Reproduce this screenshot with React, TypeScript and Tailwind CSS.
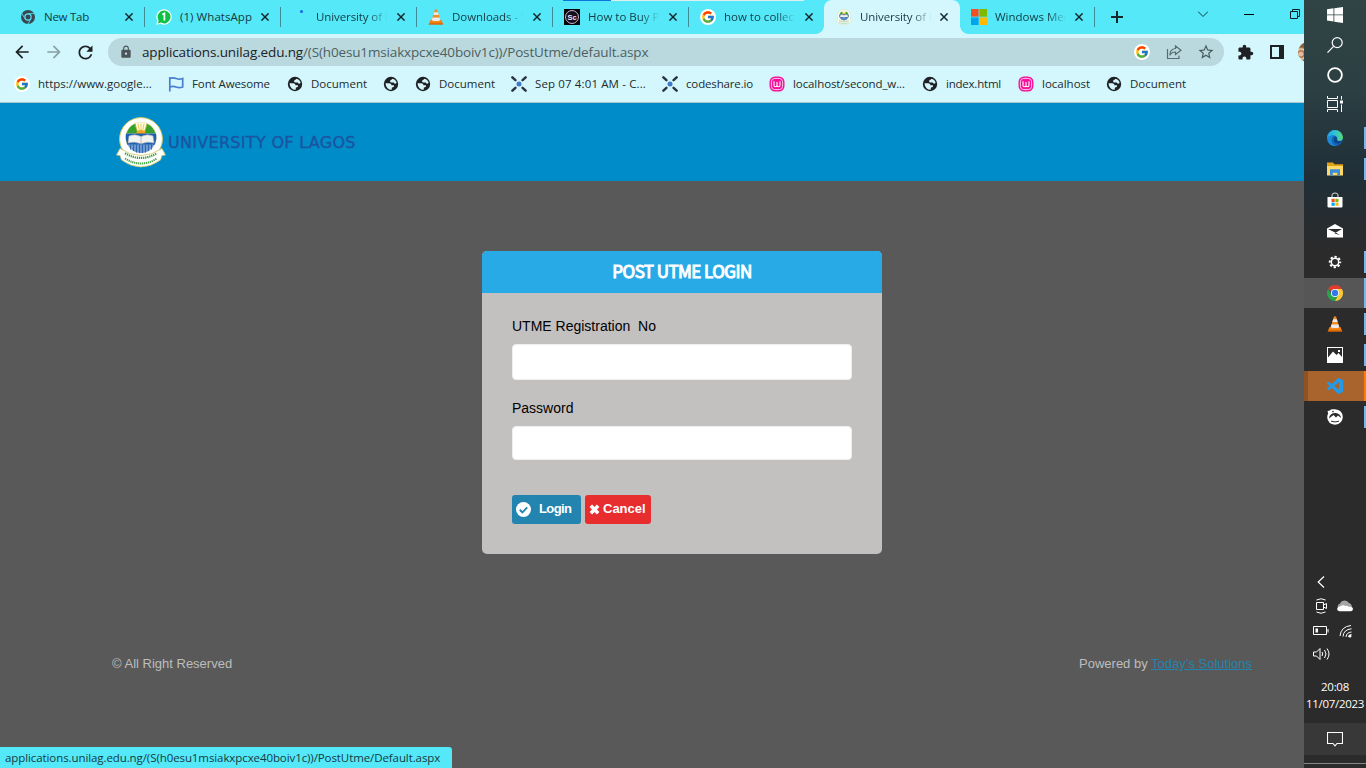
import type { ReactNode } from "react";
import { MdArrowBack, MdArrowForward, MdExtension, MdLock, MdRefresh, MdStarBorder } from "react-icons/md";
import { FcGoogle } from "react-icons/fc";

function ChromeGray() {
  return (
    <svg viewBox="0 0 16 16" className="size-4">
      <circle cx="8" cy="8" r="7" fill="#3c4650" />
      <path d="M8 4.6h6.2M5 9.7 2 4.6M11 9.7 7.9 15" stroke="#54e8f8" strokeWidth=".8" />
      <circle cx="8" cy="8" r="3.7" fill="#54e8f8" />
      <circle cx="8" cy="8" r="2.5" fill="#3c4650" />
    </svg>
  );
}
function WhatsApp() {
  return (
    <svg viewBox="0 0 16 16" className="size-4">
      <path d="M8.2.2a7.7 7.7 0 1 1-3.6 14.6L.2 15.8l1.1-4.2A7.7 7.7 0 0 1 8.2.2z" fill="#fff" />
      <path d="M8.2 1.4a6.500 6.500 0 1 1-3.300 12.200L1.900 14.400l.8-3A6.500 6.500 0 0 1 8.200 1.400z" fill="#0cc143" />
      <path d="M6.300 5.600 8.400 4.500v7" stroke="#fff" strokeWidth="1.700" fill="none" />
    </svg>
  );
}
function Cone() {
  return (
    <svg viewBox="0 0 16 16" className="size-4">
      <path d="M2.500 11h11l1.800 4.600H.7z" fill="#f07d0c" />
      <path d="M7 .6h2L12.800 12.500q-4.800 2-9.600 0z" fill="#f58a1d" />
      <path d="M6.200 3.200h3.600l.9 2.900H5.300zM4.500 8.500h7l.8 2.700q-4.300 1.700-8.600 0z" fill="#e9ecee" />
      <path d="M1.200 14.500h13.600v1.100H.7z" fill="#c85e05" />
    </svg>
  );
}
function Adobe() {
  return (
    <svg viewBox="0 0 16 16" className="size-4">
      <path d="M0 0h16v16H0z" fill="#050308" />
      <circle cx="8" cy="8" r="6.500" fill="#160f22" stroke="#d8c9dd" strokeWidth=".9" />
      <text x="8" y="10.700" textAnchor="middle" fontSize="7.500" fontFamily="Liberation Sans, sans-serif" fontWeight="bold" fill="#efe3f3">Sc</text>
    </svg>
  );
}
function Google() {
  return (
    <span className="flex size-4 items-center justify-center rounded-full bg-white">
      <FcGoogle size={14} />
    </span>
  );
}
function Microsoft() {
  return (
    <svg viewBox="0 0 16 16" className="-ml-px size-4">
      <path d="M0 0h7.600v7.600H0z" fill="#f25022" /><path d="M8.400 0H16v7.600H8.400z" fill="#7fba00" />
      <path d="M0 8.400h7.600V16H0z" fill="#00a4ef" /><path d="M8.400 8.400H16V16H8.400z" fill="#ffb900" />
    </svg>
  );
}
function Crest({ className }: { className: string }) {
  return (
    <svg viewBox="0 0 50 52" className={className}>
      <circle cx="25" cy="23" r="21.400" fill="#fff" stroke="#d3c866" strokeWidth="1" />
      <g transform="translate(-.5 -.5)">
        <circle cx="25.500" cy="22" r="15.300" fill="#fff" stroke="#dcd68c" strokeWidth=".8" />
        <path d="M11 18A15 15 0 0 1 20 8l2.500 10z" fill="#37a02c" />
        <path d="M40 18A15 15 0 0 0 31 8l-2.500 10z" fill="#37a02c" />
        <path d="M20 7.800a15 15 0 0 1 11 0L28.500 18h-6z" fill="#fffbe0" />
        <path d="M25.500 18V8M22.500 17 19.500 9M28.500 17l3-8M24 16l-1.500-8M27 16l1.500-8" stroke="#e0c23c" strokeWidth=".8" />
        <path d="M20.500 19a5 4.500 0 0 1 10 0z" fill="#f0a21c" />
        <path d="M10.500 18h30q1.200 6-1.500 11.500h-27Q9.500 24 10.500 18z" fill="#1c5fae" />
        <path d="M12 29h27q-4 8-13.500 8.500Q16 37 12 29z" fill="#6b9ad2" />
        <path d="M15 29v5M18 29v6.500M21 29v8M24 29v8.500M27 29v8.500M30 29v8M33 29v6.500M36 29v5" stroke="#2a63ab" strokeWidth=".9" />
        <path d="M13.500 20.500q6-2.500 12 .5 6-3 12-.5l1 7q-7-2-13 .8-6-2.800-13-.8z" fill="#f3f3f1" stroke="#aaaeb2" strokeWidth=".6" />
        <path d="M25.500 21v7" stroke="#999" strokeWidth=".6" />
      </g>
      <path d="M4 32.500q21 14 42 0l3.500 6.500-3.500.5-1.500 4.500q-19.500 14-39 0L4 39.500.5 39z" fill="#fff" stroke="#d3c866" strokeWidth=".8" />
      <path d="M9 37.200q16 9.500 32 0" stroke="#3c9e3c" strokeWidth="2.200" strokeDasharray="1.300 .8" fill="none" />
      <path d="M9 42.500q16 10 32 0" stroke="#3c9e3c" strokeWidth="2" strokeDasharray="1.200 .8" fill="none" />
    </svg>
  );
}
function Globe() {
  return (
    <svg viewBox="0 0 16 16" className="size-4">
      <circle cx="8" cy="8" r="7.200" fill="#202124" />
      <path d="M9.300 2.700q3.200.5 4.200 3.400.2 1.300-1 1.600-1.300-.1-1.700-1.300H8.400q-1.500.1-1.300-1.400.3-1.200 1.500-1.200z" fill="#d3f7fd" />
      <path d="M2.500 7.300h3.600q2.100.2 2.500 1.900l2.300.1q.8 1.700-.8 2l-1.200.3-.2 2.200q-2.200.3-4.200-1.500-1.900-2-2-5z" fill="#d3f7fd" />
    </svg>
  );
}
function Flag() {
  return (
    <svg viewBox="0 0 16 16" className="size-4" fill="none" stroke="#4a7fd0" strokeWidth="1.700">
      <path d="M1.800 1v14.500M1.800 2.500q3.200-1.300 6.400 0t6.500 0v8.500q-3.300 1.300-6.500 0t-6.400 0" />
    </svg>
  );
}
function Codeshare() {
  return (
    <svg viewBox="0 0 16 16" className="size-4">
      <path d="m1.400 1.400 3 2.800M14.600 1.400l-3 2.800M1.400 14.600l3-2.800M14.600 14.600l-3-2.800" stroke="#2c3440" strokeWidth="2.500" strokeLinecap="round" />
      <circle cx="8" cy="8" r="2.500" fill="#3f78c9" />
    </svg>
  );
}
function Wamp() {
  return (
    <svg viewBox="0 0 16 16" className="size-4">
      <rect x=".5" y=".5" width="15" height="15" rx="5.500" fill="#f5119c" />
      <rect x="2.400" y="2.400" width="11.200" height="11.200" rx="3.400" fill="none" stroke="#ffd6f2" strokeWidth=".9" />
      <path d="M5 5.300v3.900q0 1.600 1.500 1.600T8 9.200V6v3.200q0 1.600 1.500 1.600T11 9.200V5.300" stroke="#fff" strokeWidth="1.100" fill="none" />
    </svg>
  );
}
function Close() {
  return (
    <svg viewBox="0 0 8 8" className="size-2" stroke="#14282c" strokeWidth="1.500">
      <path d="m.4.4 7.200 7.200M7.600.4.4 7.600" />
    </svg>
  );
}

const fade = "[mask-image:linear-gradient(to_right,black_72%,transparent_98%)]";
const tabs: { icon: ReactNode; label: string; cls: string; divider: boolean; active?: boolean }[] = [
  { icon: <ChromeGray />, label: "New Tab", cls: "tracking-[-0.25px]", divider: true },
  { icon: <WhatsApp />, label: "(1) WhatsApp", cls: "tracking-[0.06px]", divider: true },
  { icon: <span className="mb-3 ml-2 size-[3px] rounded-full bg-[#1a62e8]" />, label: "University of L", cls: `tracking-[-0.1px] ${fade}`, divider: true },
  { icon: <Cone />, label: "Downloads - Y", cls: `tracking-[-0.05px] ${fade}`, divider: true },
  { icon: <Adobe />, label: "How to Buy Po", cls: fade, divider: true },
  { icon: <Google />, label: "how to collect", cls: fade, divider: false },
  { icon: <Crest className="size-4" />, label: "University of L", cls: `tracking-[-0.1px] ${fade}`, divider: false, active: true },
  { icon: <Microsoft />, label: "Windows Med", cls: `-ml-px ${fade}`, divider: true },
];

function TabStrip() {
  return (
    <div className="relative flex h-[34px] bg-[#54e8f8] pl-2">
      <div className="absolute left-[563px] top-0 flex h-px w-[241px] bg-[#dfeef0]">
        <div className="w-12 bg-[#0d74dc]" />
      </div>
      {tabs.map((t, i) => (
        <div key={i} className={`relative flex shrink-0 items-center pl-3 ${i === 7 ? "w-[135px]" : "w-[136px]"} ${t.active ? "rounded-t-lg bg-[#d3f7fd]" : ""}`}>
          {t.active && (
            <>
              <div className="absolute -left-2 bottom-0 size-2 bg-[radial-gradient(circle_at_0_0,#54e8f8_7.5px,#d3f7fd_8px)]" />
              <div className="absolute -right-2 bottom-0 size-2 bg-[radial-gradient(circle_at_100%_0,#54e8f8_7.5px,#d3f7fd_8px)]" />
            </>
          )}
          <div className="flex w-6 shrink-0 items-center">{t.icon}</div>
          <div className={`w-[73px] shrink-0 overflow-hidden whitespace-nowrap text-[11.5px] leading-5 text-[#143b42] ${t.cls}`}>{t.label}</div>
          <div className={t.active ? "ml-[7px]" : i === 7 ? "ml-[7px]" : "ml-2"}><Close /></div>
          {t.divider && <div className={`absolute right-0 top-[7px] h-5 w-px bg-[#3d8c96] ${i === 7 ? "" : "translate-x-px"}`} />}
        </div>
      ))}
      <svg viewBox="0 0 12 12" className="ml-4 mt-[11px] size-3" stroke="#16282c" strokeWidth="2"><path d="M6 0v12M0 6h12" /></svg>
      <svg viewBox="0 0 10 10" className="ml-[75px] mt-[9px] size-2.5" stroke="#14383e" fill="none"><path d="m0 2.500 5 5 5-5" /></svg>
      <div className="ml-9 mt-[14px] h-px w-2.5 bg-black" />
      <svg viewBox="0 0 10 10" className="ml-9 mt-[9px] size-2.5 shrink-0" stroke="#0d2024" fill="none"><path d="M.5 2.500h7v7h-7zM2.500 2.500v-2h7v7h-2" /></svg>
    </div>
  );
}

function Toolbar() {
  return (
    <div className="flex h-9 items-center overflow-hidden bg-[#d3f7fd] pl-3 text-[#202124]">
      <MdArrowBack size={20} className="shrink-0" />
      <MdArrowForward size={20} className="ml-3 shrink-0 text-[#8aa0a5]" />
      <MdRefresh size={21} className="ml-[11px] shrink-0" />
      <div className="ml-3 flex h-7 w-[1116px] shrink-0 items-center rounded-full bg-[#b9d9de] pl-[11px] pr-[9px]">
        <MdLock size={14} className="shrink-0 text-[#4b5558]" />
        <span className="ml-[9px] whitespace-nowrap text-[13.5px] tracking-[-0.13px] text-[#202124]">applications.unilag.edu.ng</span>
        <span className="flex-1 whitespace-nowrap text-[13.5px] tracking-[-0.15px] text-[#4e5f63]">/(S(h0esu1msiakxpcxe40boiv1c))/PostUtme/default.aspx</span>
        <Google />
        <svg viewBox="0 0 16 16" className="ml-4 size-4" fill="none" stroke="#5b6a6e" strokeWidth="1.200">
          <path d="M1.500 5v9.500h11.500v-3M9.500 2l5.500 4.200-5.500 4.300V8Q5.500 8 3.800 11.300 4 5 9.500 4.500z" />
        </svg>
        <MdStarBorder size={18} className="ml-[15px] text-[#4b5a5e]" />
      </div>
      <MdExtension size={17} className="ml-[13px] shrink-0" />
      <svg viewBox="0 0 14 14" className="ml-4 size-3.5 shrink-0"><path d="M1 1h12v12H1z" fill="none" stroke="#202124" strokeWidth="2" /><path d="M9 1h4v12H9z" fill="#202124" /></svg>
      <div className="ml-3.5 size-5 shrink-0 rounded-full bg-[radial-gradient(circle_at_3px_12px,#e9b9a0_2px,#a8683c_3px,#ead2a8_5px,#8b5a3a_7px)]" />
    </div>
  );
}

function Bookmarks() {
  const items: [ReactNode, string, string][] = [
    [<Google />, "https://www.google...", "w-[154px]"],
    [<Flag />, "Font Awesome", "w-[119px] tracking-[-0.1px]"],
    [<Globe />, "Document", "w-24"],
    [<Globe />, "", "w-8"],
    [<Globe />, "Document", "w-24"],
    [<Codeshare />, "Sep 07 4:01 AM - C...", "w-[151px] tracking-[0.13px]"],
    [<Codeshare />, "codeshare.io", "w-[107px] tracking-[-0.15px]"],
    [<Wamp />, "localhost/second_w...", "w-[153px] tracking-[-0.09px]"],
    [<Globe />, "index.html", "w-24 tracking-[-0.22px]"],
    [<Wamp />, "localhost", "w-[88px]"],
    [<Globe />, "Document", "w-24"],
  ];
  return (
    <div className="flex h-[33px] items-center border-b border-[#a9c6cb] bg-[#d3f7fd] pb-1 pl-3.5 text-[11.5px] text-[#1d2b2e]">
      {items.map(([icon, label, cls], i) => (
        <div key={i} className={`flex shrink-0 items-center gap-2 whitespace-nowrap ${cls}`}>
          <span className="shrink-0">{icon}</span>
          {label}
        </div>
      ))}
    </div>
  );
}

function Page() {
  return (
    <main className="flex flex-1 flex-col bg-[#595959] font-['Liberation_Sans',sans-serif]">
      <header className="flex h-[78px] items-center bg-[#008bc9] pl-[116px]">
        <Crest className="h-[52px] w-[50px]" />
        <span className="ml-0.5 mt-0.5 font-['DejaVu_Sans',sans-serif] text-base tracking-[0.3px] text-[#1b549f] [-webkit-text-stroke:0.3px_#1b549f]">UNIVERSITY OF LAGOS</span>
      </header>
      <section className="ml-[482px] mt-[70px] h-[303px] w-[400px] overflow-hidden rounded-[5px] bg-[#c3c0c0]">
        <h1 className="flex h-[42px] items-center justify-center bg-[#27aae6] pb-0.5 font-['Noto_Sans_CJK_JP',sans-serif] text-[17px] tracking-[-0.55px] text-white [-webkit-text-stroke:1px_white]">POST UTME LOGIN</h1>
        <form className="flex flex-col px-[30px] pt-[23px] text-sm text-black">
          <label className="h-5 whitespace-pre leading-5">UTME Registration  No</label>
          <input className="mt-2 h-9 rounded-[4px] border border-[#eeeeee] bg-white" />
          <label className="mt-[18px] h-5 leading-5">Password</label>
          <input className="mt-2 h-[34px] rounded-[4px] border border-[#eeeeee] bg-white" />
          <div className="mt-[35px] flex gap-1 text-[13px] font-bold text-white">
            <button type="button" className="flex h-[29px] w-[69px] items-center rounded-[3px] bg-[#2384b0] pl-1">
              <svg viewBox="0 0 16 16" className="size-[15px]"><circle cx="8" cy="8" r="8" fill="#fff" /><path d="m4 8.300 2.800 2.700L12 5.800" stroke="#2384b0" strokeWidth="2" fill="none" /></svg>
              <span className="ml-2 tracking-[-0.6px]">Login</span>
            </button>
            <button type="button" className="flex h-[29px] w-[66px] items-center rounded-[3px] bg-[#e72d2e] pl-1">
              <svg viewBox="0 0 12 12" className="size-[11px]"><path d="m2 2 8 8M10 2l-8 8" stroke="#fff" strokeWidth="3.900" /></svg>
              <span className="ml-[3px]">Cancel</span>
            </button>
          </div>
        </form>
      </section>
      <footer className="mt-[100px] flex h-5 justify-between pl-28 pr-[52px] text-[13px] leading-5 text-[#bdbdbd]">
        <span>© All Right Reserved</span>
        <span>Powered by <a className="text-[#2384b0] underline">Today’s Solutions</a></span>
      </footer>
      <div className="mt-auto flex h-[21px] w-[452px] items-center whitespace-nowrap rounded-tr-[3px] bg-[#54e8f8] pl-[5px] font-['Open_Sans',sans-serif] text-[11.5px] tracking-[-0.09px] text-[#143b42]">
        applications.unilag.edu.ng/(S(h0esu1msiakxpcxe40boiv1c))/PostUtme/Default.aspx
      </div>
    </main>
  );
}

const s = "size-4";
const system: ReactNode[] = [
  <svg viewBox="0 0 16 16" className={s} fill="#fff"><path d="M0 2.200 6.500 1.300v6.200H0zM7.300 1.200 16 0v7.500H7.300zM0 8.300h6.500v6.200L0 13.600zM7.300 8.300H16V16l-8.700-1.200z" /></svg>,
  <svg viewBox="0 0 16 16" className={s} fill="none" stroke="#fff" strokeWidth="1.200"><circle cx="10.200" cy="5.600" r="5" /><path d="M6.600 9.400.5 15.600" /></svg>,
  <svg viewBox="0 0 16 16" className={s} fill="none" stroke="#fff" strokeWidth="1.800"><circle cx="8" cy="8" r="6.900" /></svg>,
  <svg viewBox="0 0 16 16" className="mb-0.5 size-4" fill="none" stroke="#fff"><path d="M.5 0v2.500h10V0M.5 4.500h10v7H.5zM.5 16v-2.500h10V16M14.500 0v3.500M14.500 8.500V16" /><path d="M13 4.500h3v3h-3z" fill="#fff" stroke="none" /></svg>,
];
const apps: { icon: ReactNode; row?: string; bar?: string }[] = [
  { bar: "bg-[#76b9ed]", icon: <svg viewBox="0 0 16 16" className={s}><defs><linearGradient id="edgeA" x2="1"><stop stopColor="#1fa4e8" /><stop offset=".55" stopColor="#32c6d0" /><stop offset="1" stopColor="#5ed964" /></linearGradient></defs><circle cx="8" cy="8" r="8" fill="#1464b4" /><path d="M.1 7.500A8 8 0 0 1 16 7q0 4-4.600 4-2.500-.3-1.200-2Q10.500 6 7 5.600 2.500 5 .1 8.500z" fill="url(#edgeA)" /><path d="M.1 7.500Q3.500 4.500 6.500 6 3.800 8.500 5 12t5 3.700Q3 17 .6 11z" fill="#1b8ad8" /><path d="M9.900 9.500q.5 2.300 5 1.500-1.300 2.800-4.300 2.600Q6.500 13 7 9q.3-2 2-2 1.500.5.900 2.500z" fill="#0c4589" /></svg> },
  { bar: "bg-[#76b9ed]", icon: <svg viewBox="0 0 16 16" className={s}><path d="M0 1.500h6l1.500 1.700H16v4H0z" fill="#dfa211" /><path d="M0 5h16v9.500H0z" fill="#ffd866" /><path d="M3 14.500V8.300h10v6.200h-2.700v-2.700H5.700v2.700z" fill="#3a8ddb" /></svg> },
  { icon: <svg viewBox="0 0 16 16" className={s}><path d="M5 5V3q0-2 3-2t3 2v2" stroke="#ddd" fill="none" /><path d="M.5 5h15v9.500q0 1-1 1h-13q-1 0-1-1z" fill="#fff" /><path d="M4.500 6.800h3.200V10H4.500z" fill="#f25022" /><path d="M8.300 6.800h3.200V10H8.300z" fill="#7fba00" /><path d="M4.500 10.600h3.200v3.200H4.500z" fill="#00a4ef" /><path d="M8.300 10.600h3.200v3.200H8.300z" fill="#ffb900" /></svg> },
  { icon: <svg viewBox="0 0 16 16" className={s}><path d="M0 5.500 8 1l8 4.500v9H0z" fill="#fff" /><path d="M1 6h14L8.500 9.800zM9 9.700 13 12 7.500 10.500z" fill="#2b2b2b" /></svg> },
  { bar: "bg-[#76b9ed]", icon: <svg viewBox="0 0 16 16" className={s}><circle cx="8" cy="8" r="5.200" fill="none" stroke="#fff" strokeWidth="2" strokeDasharray="2.300 1.780" strokeDashoffset="1.150" /><circle cx="8" cy="8" r="3.700" fill="none" stroke="#fff" strokeWidth="1.500" /></svg> },
  { row: "bg-[#565656]", bar: "bg-[#76b9ed]", icon: <svg viewBox="0 0 16 16" className={s}><path d="M8 8 1.070 4A8 8 0 0 1 14.930 4H8z" fill="#e33b2e" /><path d="M1.070 4A8 8 0 0 0 8 16l3.460-6H8L4.540 10z" fill="#2ba24c" /><path d="M14.930 4A8 8 0 0 1 8 16l3.460-6L8 4z" fill="#fcc934" /><circle cx="8" cy="8" r="4" fill="#fff" /><circle cx="8" cy="8" r="3.200" fill="#3478e8" /></svg> },
  { bar: "bg-[#76b9ed]", icon: <Cone /> },
  { bar: "bg-[#76b9ed]", icon: <svg viewBox="0 0 16 16" className={s}><path d="M0 0h16v16H0z" fill="#fff" /><path d="M1 1h14v9l-3.500-4L9.500 8 6 4.500 1 10.500z" fill="#2b2b2b" /><path d="M11 3h2v2h-2z" fill="#fff" /></svg> },
  { row: "border-l-4 border-[#8f5225] bg-[#a9632d]", bar: "bg-[#ff7a0a]", icon: <svg viewBox="0 0 24 24" className={s} fill="#2499e6"><path d="M23.150 2.587L18.210.21a1.494 1.494 0 0 0-1.705.29l-9.460 8.630-4.120-3.128a.999.999 0 0 0-1.276.057L.327 7.261A1 1 0 0 0 .326 8.740L3.899 12 .326 15.260a1 1 0 0 0 .001 1.479L1.650 17.940a.999.999 0 0 0 1.276.057l4.120-3.128 9.460 8.630a1.492 1.492 0 0 0 1.704.29l4.942-2.377A1.500 1.500 0 0 0 24 20.060V3.939a1.500 1.500 0 0 0-.85-1.352zm-5.146 14.861L10.826 12l7.178-5.448v10.896z" /></svg> },
  { bar: "bg-[#76b9ed]", icon: <svg viewBox="0 0 16 16" className={s}><path d="M3 1.500Q3-.3 8 .3q7.500.7 7.800 7.700-.3 7-7.800 7.700Q.8 15 .2 8.500q0-2.500 1-4L.5 2z" fill="#fff" /><path d="M2 9.500Q2.500 4 8.500 4q5 .3 5.500 5l-3-2.500-2 2L6.500 6z" fill="#2b2b2b" /><circle cx="6" cy="2.600" r=".8" fill="#2b2b2b" /><path d="M4 12.200q4 1.500 8 0" stroke="#2b2b2b" fill="none" /></svg> },
];

function Taskbar() {
  return (
    <aside className="flex w-[62px] shrink-0 flex-col bg-[linear-gradient(to_bottom,#304444_0,#2c3f43_90px,#202f38_175px,#2b2b2b_250px)]">
      <div className="flex h-[122px] flex-col">
        {system.map((icon, i) => (
          <div key={i} className="flex h-[30px] items-center justify-center">{icon}</div>
        ))}
      </div>
      {apps.map((a, i) => (
        <div key={i} className="flex h-[31px] flex-col pt-px">
          <div className={`relative flex h-[30px] items-center justify-center ${a.row ?? ""}`}>
            <div className={i === 8 ? "-ml-1" : ""}>{a.icon}</div>
            {a.bar && <div className={`absolute right-0 w-0.5 ${a.row ? "h-[30px]" : "h-[22px]"} ${a.bar}`} />}
          </div>
        </div>
      ))}
      <div className="mt-auto flex flex-col pl-[9px]">
        <svg viewBox="0 0 8 12" className="ml-1 h-3 w-2" fill="none" stroke="#fff" strokeWidth="1.200"><path d="M7 .5 1.200 6 7 11.500" /></svg>
        <div className="mt-2.5 flex items-center gap-2">
          <svg viewBox="0 0 16 16" className={s} fill="none" stroke="#fff"><path d="M3.500 4.500h7v7h-7zM10.500 7l3-1.500v5l-3-1.500M3.500 2q4.500-2.500 9 0M3.500 14q4.500 2.500 9 0" /></svg>
          <svg viewBox="0 0 16 16" className={s}><path d="M1 10A3.500 3.500 0 0 1 3 5.500 5 5 0 0 1 12 5q2.500.5 3 4z" fill="#a5a5a5" /><path d="M2.500 13.300Q0 13 .1 10.800q.5-2.200 3-2.300Q6 6.500 8.500 8q1.800-.7 3.200.8 4-.5 4.300 2.300-.3 2.200-2.300 2.200z" fill="#fff" /></svg>
        </div>
        <div className="mt-[9px] flex items-center gap-[9px]">
          <svg viewBox="0 0 16 16" className={s} fill="none" stroke="#fff"><path d="M.5 3.500h13v8H.5zM15 6v3.500" /><path d="M2.500 5.500H5v4H2.500z" fill="#fff" stroke="none" /></svg>
          <svg viewBox="0 0 16 16" className={s} fill="none" stroke="#fff"><path d="M2 13Q3 3.500 13 2.500M5 13.500q.5-7 8.500-7.700M8 14q.3-4.500 5.500-5M10.500 14q.2-2 3-2.500" /><circle cx="12" cy="13" r="1.500" fill="#fff" stroke="none" /></svg>
        </div>
        <svg viewBox="0 0 17 16" className="mt-[7px] h-4 w-[17px]" fill="none" stroke="#fff"><path d="M.5 6h3L7 2.500v11L3.500 10h-3zM9 6q1.500 2 0 4M11.500 4q3 4 0 8M14 2.500q4 5.500 0 11" /></svg>
      </div>
      <div className="mt-4 flex flex-col items-center text-[11.5px] leading-[17px] tracking-[-0.3px] text-white">
        <span>20:08</span>
        <span>11/07/2023</span>
      </div>
      <div className="mt-[11px] flex h-8 items-center justify-center bg-[#383838]">
        <svg viewBox="0 0 16 16" className={s} fill="none" stroke="#fff" strokeWidth="1.100"><path d="M.5 1.500h15v11H10l-2 2.300-2-2.300H.5z" /></svg>
      </div>
      <div className="mb-1 mt-2 h-px bg-[#858585]" />
    </aside>
  );
}

export default function App() {
  return (
    <div className="flex h-[768px] w-[1366px] overflow-hidden font-['Open_Sans',sans-serif]">
      <div className="flex w-[1304px] shrink-0 flex-col overflow-hidden">
        <TabStrip />
        <Toolbar />
        <Bookmarks />
        <Page />
      </div>
      <Taskbar />
    </div>
  );
}
